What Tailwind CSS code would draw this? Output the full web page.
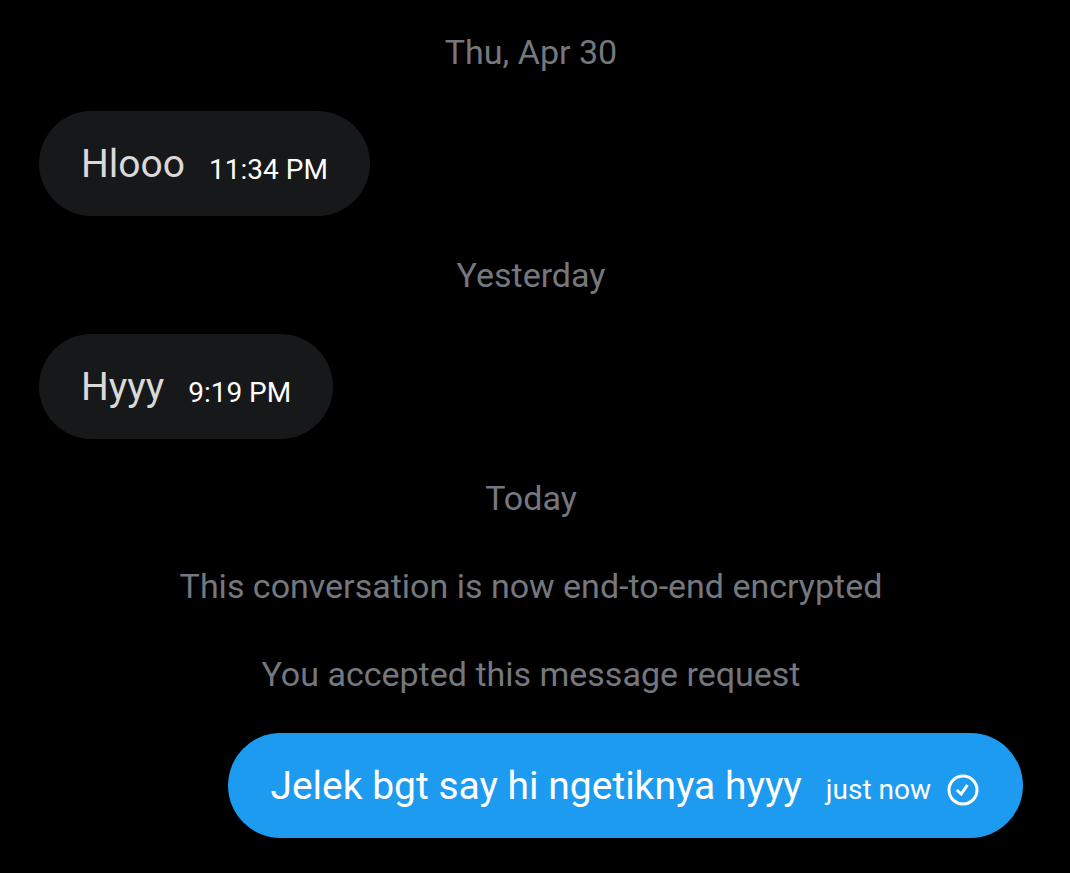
<!DOCTYPE html>
<html lang="en">
<head>
    <meta charset="UTF-8">
    <meta name="viewport" content="width=device-width, initial-scale=1.0">
    <script src="https://cdn.jsdelivr.net/npm/@tailwindcss/browser@4"></script>
    <title>Messages</title>
</head>
<body class="bg-black font-['Roboto','Noto_Sans',sans-serif]">
    <main class="flex flex-col min-h-screen pl-[39px] pr-[47px] pt-[30px] pb-[35px] text-[34px] leading-[44px] text-[#74787e]">
        <h2 class="text-center">Thu, Apr 30</h2>
        <!-- RECEIVED -->
        <div class="flex items-center gap-6 self-start mt-[37px] px-[42px] h-[105px] rounded-full bg-[#16181a]">
            <p class="text-[39px] text-[#d9d9d9]">Hlooo</p>
            <time class="pt-3 text-[28px] text-white">11:34 PM</time>
        </div>
        <h2 class="mt-[37px] text-center">Yesterday</h2>
        <div class="flex items-center gap-6 self-start mt-[37px] px-[42px] h-[105px] rounded-full bg-[#16181a]">
            <p class="text-[39px] text-[#d9d9d9]">Hyyy</p>
            <time class="pt-3 text-[28px] text-white">9:19 PM</time>
        </div>
        <h2 class="mt-[37px] text-center">Today</h2>
        <p class="mt-11 text-center">This conversation is now end-to-end encrypted</p>
        <p class="mt-11 text-center">You accepted this message request</p>
        <!-- SENT -->
        <div class="flex items-center gap-6 self-end mt-[37px] pl-[42px] pr-11 h-[105px] rounded-full bg-[#1d9bf0] text-white">
            <p class="text-[39px]">Jelek bgt say hi ngetiknya hyyy</p>
            <div class="flex items-center gap-4 pt-2 text-[28px]">
                <time>just now</time>
                <svg class="size-8" viewBox="0 0 32 32" fill="none" stroke="currentColor" stroke-width="3" role="img" aria-label="Sent">
                    <circle cx="16" cy="16" r="14"/>
                    <path d="M9.8 16l4.4 4 6.2-9"/>
                </svg>
            </div>
        </div>
    </main>
</body>
</html>
